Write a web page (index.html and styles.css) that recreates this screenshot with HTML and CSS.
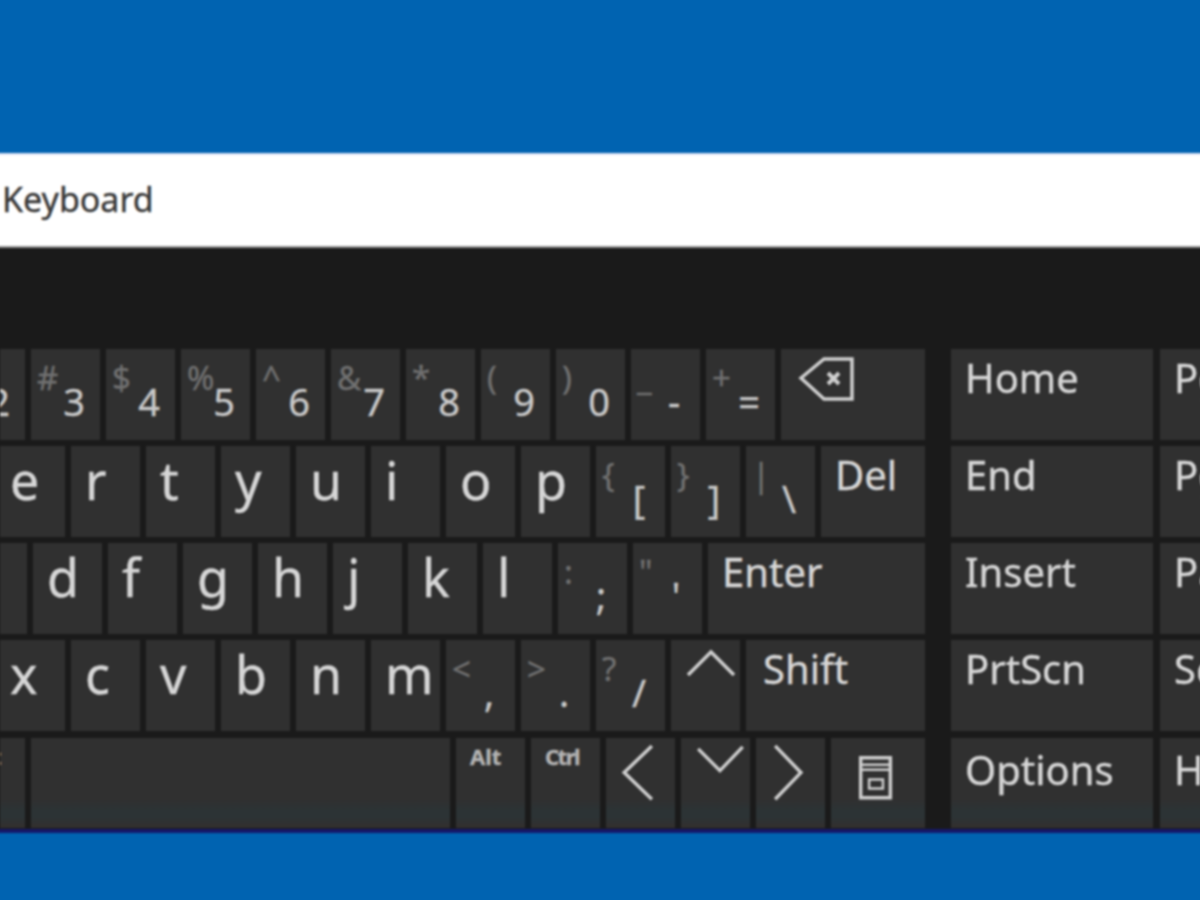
FILE: index.html
```html
<!DOCTYPE html>
<html lang="en">
<head>
    <meta charset="UTF-8">
    <title>On-Screen Keyboard</title>
    <link rel="stylesheet" href="styles.css">
</head>
<body>
    <div class="window">
        <div class="titlebar">Keyboard</div>
        <div class="panel">
            <div class="main">
                <div class="row row-num">
                    <div class="key dual"><span class="alt">@</span><span class="num">2</span></div>
                    <div class="key dual"><span class="alt">#</span><span class="num">3</span></div>
                    <div class="key dual"><span class="alt">$</span><span class="num">4</span></div>
                    <div class="key dual"><span class="alt">%</span><span class="num">5</span></div>
                    <div class="key dual"><span class="alt">^</span><span class="num">6</span></div>
                    <div class="key dual"><span class="alt">&amp;</span><span class="num">7</span></div>
                    <div class="key dual"><span class="alt">*</span><span class="num">8</span></div>
                    <div class="key dual"><span class="alt">(</span><span class="num">9</span></div>
                    <div class="key dual"><span class="alt">)</span><span class="num">0</span></div>
                    <div class="key dual"><span class="alt">_</span><span class="num">-</span></div>
                    <div class="key dual"><span class="alt">+</span><span class="num">=</span></div>
                    <div class="key grow">
                        <svg class="icon" viewBox="0 0 144 91">
                            <path d="M20 29 L43 10 H71 V50 H43 Z"/>
                            <path d="M47 24 L58 35 M58 24 L47 35" class="thick"/>
                        </svg>
                    </div>
                </div>
                <div class="row row-top">
                    <div class="key letter">e</div>
                    <div class="key letter">r</div>
                    <div class="key letter">t</div>
                    <div class="key letter">y</div>
                    <div class="key letter">u</div>
                    <div class="key letter">i</div>
                    <div class="key letter">o</div>
                    <div class="key letter">p</div>
                    <div class="key dual"><span class="alt">{</span><span class="num">[</span></div>
                    <div class="key dual"><span class="alt">}</span><span class="num">]</span></div>
                    <div class="key dual"><span class="alt">|</span><span class="num">\</span></div>
                    <div class="key grow label">Del</div>
                </div>
                <div class="row row-home">
                    <div class="key letter"></div>
                    <div class="key letter">d</div>
                    <div class="key letter">f</div>
                    <div class="key letter">g</div>
                    <div class="key letter">h</div>
                    <div class="key letter">j</div>
                    <div class="key letter">k</div>
                    <div class="key letter">l</div>
                    <div class="key dual"><span class="alt">:</span><span class="num">;</span></div>
                    <div class="key dual"><span class="alt">"</span><span class="num">'</span></div>
                    <div class="key grow label">Enter</div>
                </div>
                <div class="row row-low">
                    <div class="key letter">x</div>
                    <div class="key letter">c</div>
                    <div class="key letter">v</div>
                    <div class="key letter">b</div>
                    <div class="key letter">n</div>
                    <div class="key letter">m</div>
                    <div class="key dual"><span class="alt">&lt;</span><span class="num">,</span></div>
                    <div class="key dual"><span class="alt">&gt;</span><span class="num">.</span></div>
                    <div class="key dual"><span class="alt">?</span><span class="num">/</span></div>
                    <div class="key">
                        <svg class="icon" viewBox="0 0 69 91"><path d="M17 35 L40 12 L63 35"/></svg>
                    </div>
                    <div class="key grow label shift">Shift</div>
                </div>
                <div class="row row-bottom">
                    <div class="key small last">Alt</div>
                    <div class="key space last"></div>
                    <div class="key small last">Alt</div>
                    <div class="key small ctrl last">Ctrl</div>
                    <div class="key last">
                        <svg class="icon" viewBox="0 0 69 91"><path d="M46 8 L18 35 L46 62"/></svg>
                    </div>
                    <div class="key last">
                        <svg class="icon" viewBox="0 0 69 91"><path d="M17 11 L39 33 L62 9"/></svg>
                    </div>
                    <div class="key last">
                        <svg class="icon" viewBox="0 0 69 91"><path d="M19 8 L45 35 L19 62"/></svg>
                    </div>
                    <div class="key grow last">
                        <svg class="icon" viewBox="0 0 94 91">
                            <path d="M29.5 20 H59.5 V60.500 H29.500 Z"/>
                            <path d="M29 27 H60 M29 32 H60" class="thin"/>
                            <path d="M38 42 H52 V51 H38 Z" class="thin"/>
                        </svg>
                    </div>
                </div>
            </div>
            <div class="nav">
                <div class="key label">Home</div>
                <div class="key label">PgUp</div>
                <div class="key label">End</div>
                <div class="key label">PgDn</div>
                <div class="key label">Insert</div>
                <div class="key label">Pause</div>
                <div class="key label">PrtScn</div>
                <div class="key label">ScrLk</div>
                <div class="key label last">Options</div>
                <div class="key label last">Help</div>
            </div>
        </div>
    </div>
</body>
</html>
```

FILE: styles.css
```css
body {
    margin: 0;
    height: 900px;
    overflow: hidden;
    padding-top: 153px;
    box-sizing: border-box;
    background: #0063b1;
    font-family: "Noto Sans", "Open Sans", sans-serif;
}
/* the blur bleeds at the edges, so the window runs a bit past the frame */
.window {
    margin: 0 -8px;
    filter: blur(1px);
    border-bottom: 4px solid #15186a;
}
.titlebar {
    height: 91px;
    padding-left: 10px;
    background: white;
    border-top: 2px solid #dfe4f5;
    border-bottom: 2px solid #8f8f8f;
    color: #3a3a3a;
    font-size: 34px;
    line-height: 89px;
    -webkit-text-stroke: 0.4px #3a3a3a;
}
.panel {
    display: flex;
    gap: 26px;
    padding: 101px 0 1px 8px;
    background: #1a1a1a;
}
.main {
    width: 925px;
    flex: none;
    overflow: hidden;
}
.row {
    display: flex;
    gap: 6px;
    height: 91px;
    margin-bottom: 6px;
}
.row-low {
    margin-bottom: 7px;
}
.row-bottom {
    height: 90px;
    margin-bottom: 0;
}
.row-num, .row-bottom {
    margin-left: -44px;
}
.row-top, .row-low {
    margin-left: -4px;
}
.row-home {
    margin-left: -42px;
}
.nav {
    display: grid;
    grid-template-columns: 202px 202px;
    grid-auto-rows: 91px;
    gap: 6px 7px;
}
.key {
    width: 69px;
    flex: none;
    box-sizing: border-box;
    background: #303030;
    color: #d6d6d6;
    -webkit-text-stroke: 0.4px;
}
.nav .key {
    width: auto;
}
.grow {
    flex: 1;
}
.space {
    width: 419px;
}
.last {
    background: linear-gradient(#303030 68%, #2c3335 80%, #2c3335 88%, #332f2e);
}
.letter {
    padding: 7px 0 0 14px;
    font-size: 52px;
    line-height: 54px;
}
.label {
    padding: 9px 0 0 14px;
    font-size: 40px;
    line-height: 40px;
}
.nav .last {
    margin-top: 1px;
    padding-top: 12px;
}
.shift {
    padding-left: 17px;
}
.small {
    padding: 7px 0 0 14px;
    font-size: 22px;
    line-height: 22px;
    font-weight: bold;
    color: #b4b4b4;
}
.ctrl {
    letter-spacing: -1.5px;
}
.dual {
    display: flex;
}
.alt {
    width: 22px;
    margin: 12px 0 0 6px;
    font-size: 33px;
    line-height: 33px;
    color: #707070;
    white-space: nowrap;
}
.num {
    width: 30px;
    align-self: flex-end;
    margin-bottom: 19px;
    font-size: 38px;
    line-height: 40px;
    text-align: center;
    color: #c8c8c8;
}
.icon {
    display: block;
    width: 100%;
    height: 100%;
    fill: none;
    stroke: #cfcfcf;
    stroke-width: 3.5;
}
.icon .thick {
    stroke-width: 4;
}
.icon .thin {
    stroke-width: 2.5;
}
```
